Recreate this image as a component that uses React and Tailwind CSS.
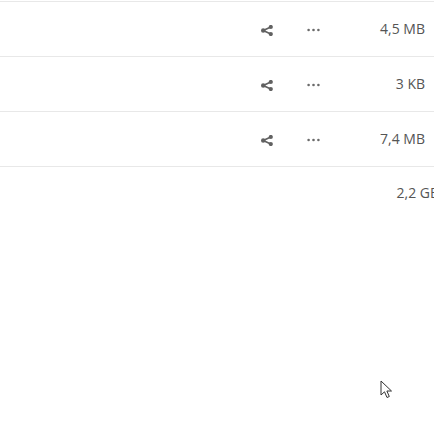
import React from 'react';

const files = [
  { size: '4,5 MB' },
  { size: '3 KB' },
  { size: '7,4 MB' },
];

const ShareIcon = () => (
  <svg width="12" height="11" viewBox="0 0 12 11" fill="#616161">
    <line x1="2.2" y1="5.5" x2="9.8" y2="2" stroke="#616161" strokeWidth="1.7" />
    <line x1="2.2" y1="5.5" x2="9.8" y2="9" stroke="#616161" strokeWidth="1.7" />
    <circle cx="2.2" cy="5.5" r="2.2" />
    <circle cx="9.8" cy="2" r="2.1" />
    <circle cx="9.8" cy="9" r="2.1" />
  </svg>
);

const Dots = () => (
  <svg width="13" height="4" viewBox="0 0 13 4" fill="#6a6a6a">
    <circle cx="1.6" cy="2" r="1.3" />
    <circle cx="6.5" cy="2" r="1.3" />
    <circle cx="11.4" cy="2" r="1.3" />
  </svg>
);

const App = () => {
  return (
    <div
      className="relative w-[434px] h-[436px] overflow-hidden bg-white pt-px"
      style={{ fontFamily: '"Open Sans", "Noto Sans", sans-serif' }}
    >
      <div className="border-t border-[#e8e8e8]">
        {files.map((f, i) => (
          <div key={i} className="flex items-center h-[55px] border-b border-[#e8e8e8]">
            <div className="w-[247px]" />
            <div className="w-[40px] flex justify-center pt-[2px]">
              <ShareIcon />
            </div>
            <div className="w-[19px]" />
            <div className="w-[14px] flex justify-center pt-[1px]">
              <Dots />
            </div>
            <div className="flex-1 flex justify-end pr-[9px] pb-[1px] text-[14px] text-[#555]">
              {f.size}
            </div>
          </div>
        ))}
        <div className="flex justify-end h-[55px] pt-[15px] mr-[-5px] text-[14px] text-[#555]">
          <span>2,2 GB</span>
        </div>
      </div>

      {/* mouse pointer */}
      <svg className="absolute left-[380px] top-[380px]" width="14" height="20" viewBox="0 0 14 20">
        <path
          d="M1 1 L1 15 L4.5 11.8 L7 17.5 L9.3 16.5 L6.9 11 L11.5 11 Z"
          fill="#fff"
          stroke="#333"
          strokeWidth="1"
          strokeLinejoin="round"
        />
      </svg>
    </div>
  );
};

export default App;
